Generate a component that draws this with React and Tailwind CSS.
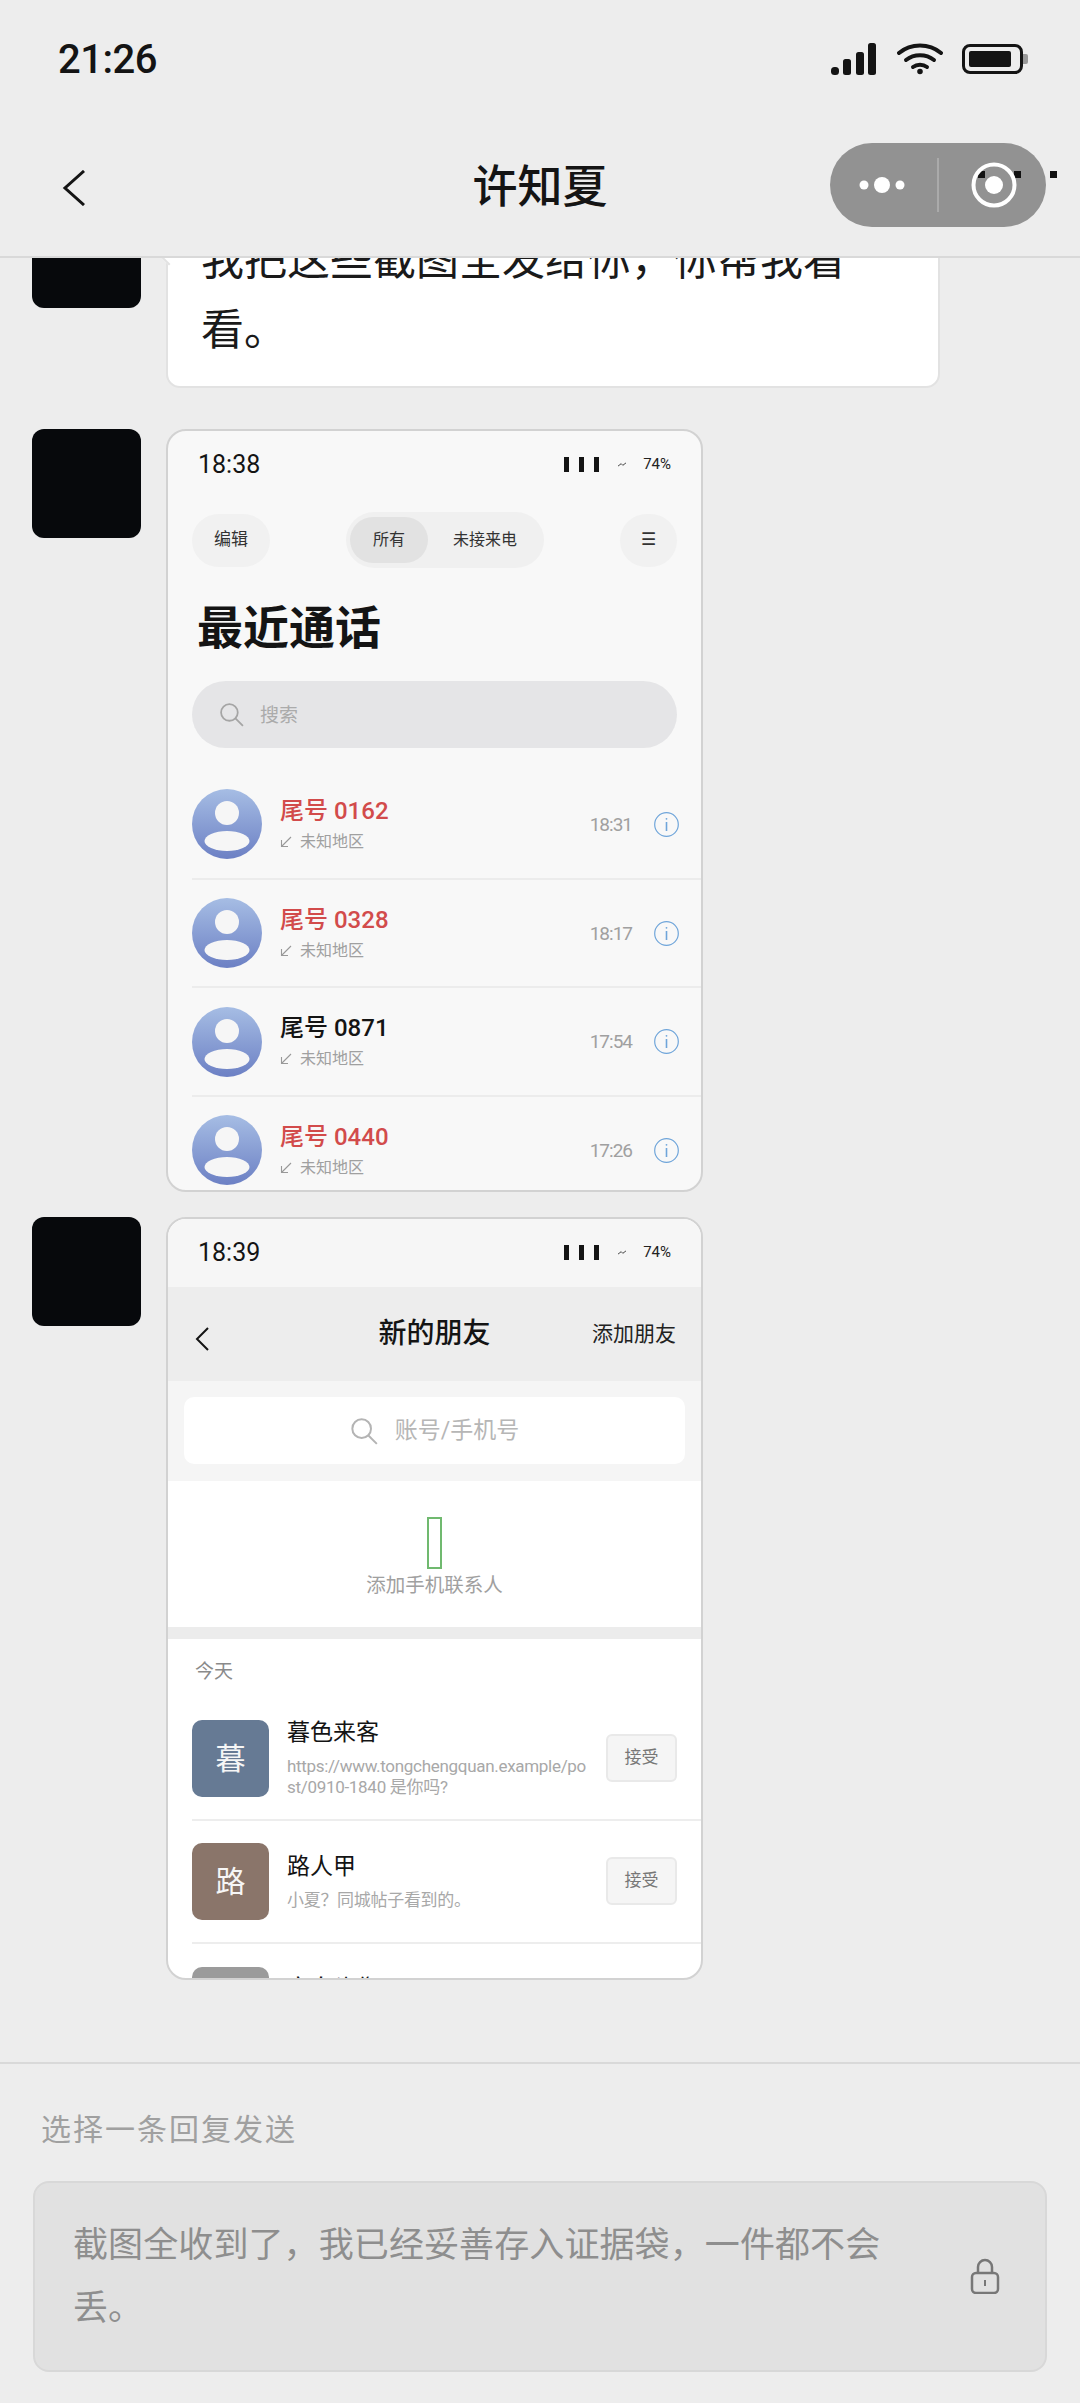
const calls = [
    { id: 'a', name: '尾号 0162', time: '18:31', missed: true },
    { id: 'b', name: '尾号 0328', time: '18:17', missed: true },
    { id: 'c', name: '尾号 0871', time: '17:54', missed: false },
    { id: 'd', name: '尾号 0440', time: '17:26', missed: true },
];

const requests = [
    {
        letter: '暮',
        color: 'bg-[#667a94]',
        name: '暮色来客',
        note: 'https://www.tongchengquan.example/post/0910-1840 是你吗?',
    },
    { letter: '路', color: 'bg-[#8a756a]', name: '路人甲', note: '小夏？同城帖子看到的。' },
];

function SearchIcon({ className }) {
    return (
        <svg viewBox="0 0 24 24" fill="none" stroke="currentColor" strokeWidth="1.7" className={className}>
            <circle cx="10" cy="10" r="8" />
            <path d="M15.8 15.8 23 23" />
        </svg>
    );
}

function MiniStatus({ time }) {
    return (
        <div className="flex h-[66px] items-center pl-[30px] pr-[30px]">
            <span className="text-[25px] leading-none text-[#141414]">{time}</span>
            <div className="ml-auto flex gap-[10px]">
                <i className="block h-[15px] w-[5px] bg-[#141414]" />
                <i className="block h-[15px] w-[5px] bg-[#141414]" />
                <i className="block h-[15px] w-[5px] bg-[#141414]" />
            </div>
            <svg viewBox="0 0 10 6" className="ml-[19px] h-[5px] w-[8px]" fill="none" stroke="#444" strokeWidth="1.2">
                <path d="M0 5 4 2 6 4 10 1" />
            </svg>
            <span className="ml-[17px] text-[15px] leading-none text-[#222]">74%</span>
        </div>
    );
}

function CallRow({ call }) {
    const grad = `grad-${call.id}`;
    return (
        <div className="ml-[24px] flex h-[108.7px] shrink-0 items-center border-b-2 border-[#ececec] pr-[22px]">
            <svg viewBox="0 0 70 70" className="h-[70px] w-[70px] shrink-0">
                <defs>
                    <linearGradient id={grad} x1="0" y1="0" x2="0" y2="1">
                        <stop offset="0" stopColor="#a6bde4" />
                        <stop offset="1" stopColor="#6c80c4" />
                    </linearGradient>
                </defs>
                <circle cx="35" cy="35" r="35" fill={`url(#${grad})`} />
                <circle cx="35" cy="24" r="12" fill="#f6f6f6" />
                <ellipse cx="35" cy="52" rx="22.5" ry="10" fill="#f6f6f6" />
            </svg>
            <div className="ml-[18px] flex flex-col">
                <span className={`text-[24px] leading-[30px] font-medium ${call.missed ? 'text-[#d24b4b]' : 'text-[#141414]'}`}>
                    {call.name}
                </span>
                <span className="mt-[5px] flex items-center text-[16px] leading-[22px] text-[#a0a0a0]">
                    <svg viewBox="0 0 12 12" className="mr-[8px] h-[12px] w-[12px]" fill="none" stroke="#999" strokeWidth="1.1">
                        <path d="M11 1 1.5 10.5M1.5 4v6.5H8" />
                    </svg>
                    未知地区
                </span>
            </div>
            <span className="ml-auto text-[19px] leading-none tracking-[-1px] text-[#a0a0a0]">{call.time}</span>
            <svg viewBox="0 0 25 25" className="ml-[22px] h-[25px] w-[25px] shrink-0" fill="none" stroke="#6fa5da" strokeWidth="1.2">
                <circle cx="12.5" cy="12.5" r="11.8" />
                <path d="M12.5 10v9" strokeWidth="1.6" />
                <circle cx="12.5" cy="6.8" r="0.9" fill="#6fa5da" stroke="none" />
            </svg>
        </div>
    );
}

function RecentCalls() {
    return (
        <div className="h-[763px] w-[537px] shrink-0 overflow-hidden rounded-[20px] border-2 border-[#d2d2d2] bg-[#f8f8f8]">
            <MiniStatus time="18:38" />
            <div className="mt-[15px] flex items-center justify-between px-[24px]">
                <div className="flex h-[53px] w-[78px] items-center justify-center rounded-full bg-[#f1f1f1] text-[17px] text-[#333]">
                    编辑
                </div>
                <div className="flex h-[56px] w-[198px] items-center rounded-full bg-[#f0f0f0] pl-[4px] text-[16px] text-[#333]">
                    <div className="flex h-[46px] w-[78px] items-center justify-center rounded-full bg-[#e2e2e2]">所有</div>
                    <span className="ml-[25px]">未接来电</span>
                </div>
                <div className="flex h-[53px] w-[57px] items-center justify-center rounded-full bg-[#f1f1f1] text-[17px] text-[#333]">
                    ☰
                </div>
            </div>
            <h1 className="mt-[29px] pl-[29px] text-[46px] leading-[62px] font-bold text-[#141414]">最近通话</h1>
            <div className="mx-[24px] mt-[22px] flex h-[67px] items-center rounded-full bg-[#e5e5e7] pl-[27px] text-[19px] text-[#ababab]">
                <SearchIcon className="h-[25px] w-[25px] text-[#a5a5a5]" />
                <span className="mt-[3px] ml-[16px]">搜索</span>
            </div>
            <div className="mt-[23px]">
                {calls.map((call) => (
                    <CallRow key={call.id} call={call} />
                ))}
            </div>
        </div>
    );
}

function RequestRow({ item }) {
    return (
        <div className="ml-[24px] flex h-[123px] shrink-0 items-center border-b-2 border-[#ededed] pr-[24px]">
            <div className={`flex h-[77px] w-[77px] shrink-0 items-center justify-center rounded-[10px] text-[30px] text-[#f6f6f6] ${item.color}`}>
                {item.letter}
            </div>
            <div className="ml-[18px] flex min-w-0 flex-1 flex-col">
                <span className="text-[23px] leading-[30px] text-[#141414]">{item.name}</span>
                <span className="mt-[8px] w-[301px] text-[17px] leading-[21px] tracking-[-0.3px] break-all text-[#a8a8a8]">{item.note}</span>
            </div>
            <div className="flex h-[48px] w-[71px] shrink-0 items-center justify-center rounded-[6px] border-2 border-[#e9e9e9] bg-[#f5f5f5] text-[17px] text-[#777]">
                接受
            </div>
        </div>
    );
}

function NewFriends() {
    return (
        <div className="flex h-[763px] w-[537px] shrink-0 flex-col overflow-hidden rounded-[20px] border-2 border-[#d2d2d2] bg-white">
            <div className="bg-[#f6f6f6] pb-[2px]">
                <MiniStatus time="18:39" />
            </div>
            <div className="relative flex h-[94px] shrink-0 items-center justify-center bg-[#ededed]">
                <svg viewBox="0 0 14 24" className="absolute top-[40px] left-[27px] h-[24px] w-[14px]" fill="none" stroke="#141414" strokeWidth="2">
                    <path d="M13 1 2 12l11 11" />
                </svg>
                <span className="text-[28px] leading-none font-medium text-[#141414]">新的朋友</span>
                <span className="absolute right-[25px] text-[21px] leading-none text-[#222]">添加朋友</span>
            </div>
            <div className="shrink-0 bg-[#f5f5f5] px-[16px] pt-[16px] pb-[17px]">
                <div className="flex h-[67px] items-center justify-center rounded-[10px] bg-white text-[23px] text-[#b6b6b6]">
                    <SearchIcon className="h-[28px] w-[28px] text-[#b4b4b4]" />
                    <span className="mt-[2px] ml-[17px]">账号/手机号</span>
                </div>
            </div>
            <div className="flex h-[146px] shrink-0 flex-col items-center pt-[36px]">
                <div className="h-[52px] w-[15px] border-2 border-[#70b96f]" />
                <span className="mt-[3px] text-[19.5px] leading-[28px] text-[#a0a0a0]">添加手机联系人</span>
            </div>
            <div className="h-[12px] shrink-0 bg-[#ececec]" />
            <div className="flex h-[58.500px] shrink-0 items-start pt-[19px] pl-[27px] text-[19px] leading-[28px] text-[#8a8a8a]">今天</div>
            <div>
                {requests.map((item) => (
                    <RequestRow key={item.name} item={item} />
                ))}
                <div className="ml-[24px] flex items-start pt-[23px]">
                    <div className="h-[77px] w-[77px] shrink-0 rounded-[10px] bg-[#9b9b9b]" />
                    <span className="ml-[18px] pt-[7px] text-[23px] leading-[30px] text-[#141414]">空白头像</span>
                </div>
            </div>
        </div>
    );
}

export default function App() {
    return (
        <div className="relative flex h-[2403px] w-[1080px] flex-col overflow-hidden bg-[#ededed] [font-family:Roboto,'Noto_Sans_CJK_SC',sans-serif]">
            <header className="relative z-10 h-[258px] shrink-0 border-b-2 border-[#d9d9d9] bg-[#ededed]">
                <div className="flex h-[118px] items-center pr-[52px] pl-[58px]">
                    <span className="pt-[2px] text-[40px] leading-none font-medium tracking-[-0.5px] text-[#141414]">21:26</span>
                    <svg viewBox="0 0 46 32" className="ml-auto h-[32px] w-[46px]" fill="#141414">
                        <rect x="0" y="24" width="8" height="8" rx="3.5" />
                        <rect x="12" y="16" width="8" height="16" rx="2.5" />
                        <rect x="25" y="9" width="8" height="23" rx="2.5" />
                        <rect x="37" y="0" width="8" height="32" rx="2.5" />
                    </svg>
                    <svg viewBox="0 0 46 32" className="ml-[20px] h-[32px] w-[46px]" fill="none" stroke="#141414" strokeWidth="4" strokeLinecap="round">
                        <path d="M2 10C14 0 32 0 44 10" />
                        <path d="M9 17c8-6.500 20-6.500 28 0" />
                        <path d="M16 24c4-3 10-3 14 0" />
                        <circle cx="23" cy="28.500" r="1.800" fill="#141414" strokeWidth="2" />
                    </svg>
                    <div className="ml-[19px] flex items-center">
                        <div className="h-[30px] w-[61px] rounded-[8px] border-[3px] border-[#141414] p-[4px]">
                            <div className="h-full w-[42px] rounded-[2px] bg-[#141414]" />
                        </div>
                        <div className="h-[10px] w-[5px] rounded-r-[2px] bg-[#999]" />
                    </div>
                </div>
                <div className="relative flex h-[138px] items-center justify-center">
                    <svg viewBox="0 0 24 36" className="absolute top-[52px] left-[62px] h-[36px] w-[24px]" fill="none" stroke="#141414" strokeWidth="3">
                        <path d="M22 1 3 18l19 17" />
                    </svg>
                    <span className="text-[45px] leading-none font-medium text-[#141414]">许知夏</span>
                    <div className="absolute top-[25px] right-[34px] flex h-[84px] w-[216px] items-center rounded-full bg-[#929292]">
                        <svg viewBox="0 0 48 20" className="ml-[29px] h-[20px] w-[48px]" fill="#fff">
                            <circle cx="5" cy="10" r="4.500" />
                            <circle cx="23" cy="10" r="8" />
                            <circle cx="41" cy="10" r="4.500" />
                        </svg>
                        <div className="ml-[30px] h-[54px] w-[2px] bg-[#aaaaaa]" />
                        <svg viewBox="0 0 46 46" className="relative z-10 ml-[32px] h-[46px] w-[46px]" fill="none">
                            <circle cx="23" cy="23" r="20.500" stroke="#fff" strokeWidth="4" />
                            <circle cx="23" cy="23" r="9" fill="#fff" />
                        </svg>
                    </div>
                    <div className="absolute top-[53px] right-[23px] flex gap-[29px]">
                        <i className="block h-[7px] w-[7px] bg-[#111]" />
                        <i className="block h-[7px] w-[7px] bg-[#111]" />
                        <i className="block h-[7px] w-[7px] bg-[#111]" />
                    </div>
                </div>
            </header>

            <main className="min-h-0 flex-1 overflow-hidden">
                <div className="-mt-[59px] flex flex-col pl-[32px]">
                    <div className="flex gap-[25px]">
                        <div className="h-[109px] w-[109px] shrink-0 rounded-[12px] bg-[#07090c]" />
                        <div className="relative w-[774px] rounded-[14px] border-2 border-[#e2e2e2] bg-white pt-[24px] pr-[34px] pb-[21px] pl-[33px] text-[43px] leading-[70px] text-[#1a1a1a]">
                            <span className="absolute top-[50px] -left-[5px] h-[12px] w-[12px] rotate-45 border-b-2 border-l-2 border-[#e2e2e2] bg-white" />
                            我把这些截图全发给你，你帮我看看。
                        </div>
                    </div>
                    <div className="mt-[41px] flex gap-[25px]">
                        <div className="h-[109px] w-[109px] shrink-0 rounded-[12px] bg-[#07090c]" />
                        <RecentCalls />
                    </div>
                    <div className="mt-[25px] flex gap-[25px]">
                        <div className="h-[109px] w-[109px] shrink-0 rounded-[12px] bg-[#07090c]" />
                        <NewFriends />
                    </div>
                </div>
            </main>

            <footer className="h-[341px] shrink-0 border-t-2 border-[#d9d9d9] px-[33px] pt-[48px]">
                <p className="pl-[8px] text-[30px] leading-[36px] tracking-[2px] text-[#a0a0a0]">选择一条回复发送</p>
                <div className="mt-[33px] flex h-[191px] items-center rounded-[16px] border-2 border-[#d8d8d8] bg-[#e1e1e1] pr-[45px] pl-[38px]">
                    <p className="w-[820px] text-[35px] leading-[63px] tracking-[0.1px] text-[#8e8e8e]">截图全收到了，我已经妥善存入证据袋，一件都不会丢。</p>
                    <svg viewBox="0 0 30 36" className="mb-[2px] ml-auto h-[36px] w-[30px]" fill="none" stroke="#777" strokeWidth="2.500">
                        <path d="M8 15V9a7 7 0 0 1 14 0v6" />
                        <rect x="2" y="15" width="26" height="20" rx="4" />
                        <path d="M15 22v6" strokeWidth="2" />
                    </svg>
                </div>
            </footer>
        </div>
    );
}
